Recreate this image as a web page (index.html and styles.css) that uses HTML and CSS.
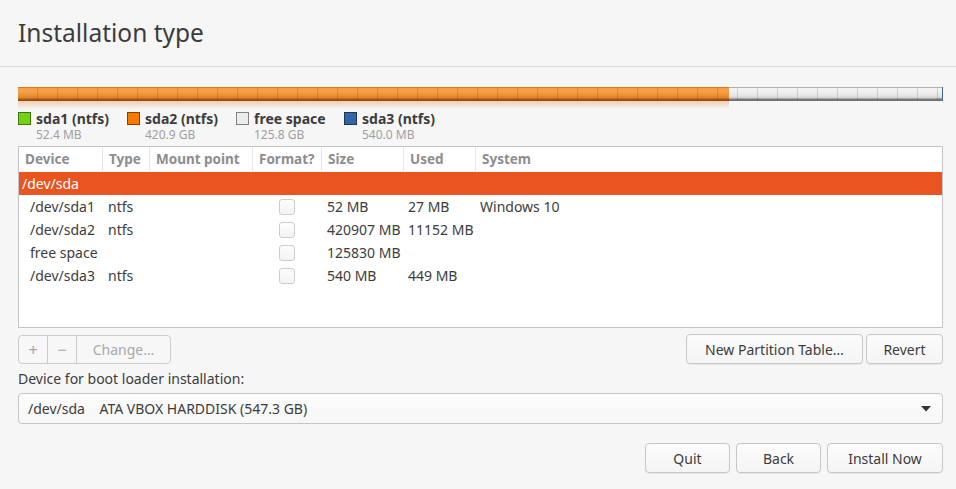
FILE: index.html
```html
<!DOCTYPE html>
<html>
<head>
<meta charset="utf-8">
<link rel="stylesheet" href="styles.css">
</head>
<body>
<div class="page">
  <header class="titlebar"><h1>Installation type</h1></header>
  <main class="content">
    <div class="diskbar">
      <div class="seg seg-sda2" style="width:711px"></div>
      <div class="seg seg-free" style="width:213px"></div>
      <div class="seg seg-sda3" style="width:1px"></div>
    </div>
    <div class="reflect">
      <div class="ref-orange" style="width:711px"></div>
    </div>
    <ul class="legend">
      <li class="leg leg1"><span class="sw sw-green"></span><div><b>sda1 (ntfs)</b><small>52.4 MB</small></div></li>
      <li class="leg leg2"><span class="sw sw-orange"></span><div><b>sda2 (ntfs)</b><small>420.9 GB</small></div></li>
      <li class="leg leg3"><span class="sw sw-free"></span><div><b>free space</b><small>125.8 GB</small></div></li>
      <li class="leg leg4"><span class="sw sw-blue"></span><div><b>sda3 (ntfs)</b><small>540.0 MB</small></div></li>
    </ul>
    <div class="table">
      <div class="row head">
        <div class="c c-dev">Device</div>
        <div class="c c-type">Type</div>
        <div class="c c-mnt">Mount point</div>
        <div class="c c-fmt">Format?</div>
        <div class="c c-size">Size</div>
        <div class="c c-used">Used</div>
        <div class="c c-sys">System</div>
      </div>
      <div class="row selected"><div class="c">/dev/sda</div></div>
      <div class="row part">
        <div class="c c-dev">/dev/sda1</div><div class="c c-type">ntfs</div><div class="c c-mnt"></div>
        <div class="c c-fmt"><span class="check"></span></div>
        <div class="c c-size">52 MB</div><div class="c c-used">27 MB</div><div class="c c-sys">Windows 10</div>
      </div>
      <div class="row part">
        <div class="c c-dev">/dev/sda2</div><div class="c c-type">ntfs</div><div class="c c-mnt"></div>
        <div class="c c-fmt"><span class="check"></span></div>
        <div class="c c-size">420907 MB</div><div class="c c-used">11152 MB</div><div class="c c-sys"></div>
      </div>
      <div class="row part">
        <div class="c c-dev">free space</div><div class="c c-type"></div><div class="c c-mnt"></div>
        <div class="c c-fmt"><span class="check"></span></div>
        <div class="c c-size">125830 MB</div><div class="c c-used"></div><div class="c c-sys"></div>
      </div>
      <div class="row part">
        <div class="c c-dev">/dev/sda3</div><div class="c c-type">ntfs</div><div class="c c-mnt"></div>
        <div class="c c-fmt"><span class="check"></span></div>
        <div class="c c-size">540 MB</div><div class="c c-used">449 MB</div><div class="c c-sys"></div>
      </div>
    </div>
    <div class="toolrow">
      <div class="tools">
        <button class="tbtn tb-plus">+</button>
        <button class="tbtn tb-minus">&minus;</button>
        <button class="tbtn tb-change">Change…</button>
      </div>
      <div class="rightbtns">
        <button class="btn btn-npt">New Partition Table…</button>
        <button class="btn btn-revert">Revert</button>
      </div>
    </div>
    <label class="bootlabel">Device for boot loader installation:</label>
    <div class="combo">
      <span class="combo-text">/dev/sda&nbsp;&nbsp;&nbsp;&nbsp;ATA VBOX HARDDISK (547.3 GB)</span>
      <svg class="combo-arrow" width="10" height="6" viewBox="0 0 10 6"><path d="M0 0 H10 L5 5.5 Z" fill="#333"/></svg>
    </div>
    <div class="footer">
      <button class="btn btn-quit">Quit</button>
      <button class="btn btn-back">Back</button>
      <button class="btn btn-install">Install Now</button>
    </div>
  </main>
</div>
</body>
</html>
```

FILE: styles.css
```css
* { box-sizing: border-box; }
html, body { margin: 0; padding: 0; }
body {
  background: #f6f6f6;
  font-family: "Noto Sans", "DejaVu Sans", sans-serif;
  font-size: 14px;
  color: #3c3c3c;
  width: 956px;
  height: 489px;
  overflow: hidden;
}
.titlebar {
  height: 67px;
  border-bottom: 1px solid #dcdcdc;
  padding: 17px 0 0 18px;
}
.titlebar h1 {
  margin: 0;
  font-weight: normal;
  font-size: 24.5px;
  color: #3c3c3c;
  letter-spacing: 0;
  line-height: 32px;
}
.content { padding: 0 13px 0 18px; }
.diskbar {
  margin-top: 20px;
  position: relative;
  display: flex;
  height: 14px;
  width: 925px;
}
.diskbar::after {
  content: "";
  position: absolute;
  inset: 1px 0 1px 0;
  background: repeating-linear-gradient(90deg, transparent 0 19px, rgba(0,0,0,0.13) 19px 20px);
  pointer-events: none;
}
.seg { height: 14px; }
.seg-sda2 {
  background: linear-gradient(#d8782a 0 1px, #f99b42 1px, #f7a24c 4px, #ef9338 8px, #e08028 11px, #a8591a 12px, #8a4a16 14px);
}
.seg-free {
  background: linear-gradient(#b0b0b0 0 1px, #f4f4f4 1px, #efefef 5px, #e4e4e4 9px, #cfcfcf 11px, #7f7f7f 12px, #6a6a6a 14px);
}
.seg-sda3 { background: #3b6aa0; }
.reflect { height: 8px; display: flex; }
.ref-orange {
  background: linear-gradient(rgba(230,130,40,0.35), rgba(230,130,40,0));
}
.legend {
  list-style: none;
  margin: 0;
  padding: 0;
  display: flex;
  height: 37px;
}
.leg { display: flex; align-items: flex-start; }
.leg1 { width: 109px; }
.leg2 { width: 109px; }
.leg3 { width: 108px; }
.sw {
  width: 13px; height: 13px;
  margin-top: 3px;
  margin-right: 5px;
  border: 1px solid rgba(0,0,0,0.45);
}
.sw-green { background: #73d216; }
.sw-orange { background: #f57900; }
.sw-free { background: #ececec; }
.sw-blue { background: #3465a4; }
.leg b { display: block; font-weight: bold; font-size: 14px; line-height: 19px; color: #3c3c3c; }
.leg small { display: block; font-size: 12px; line-height: 14px; color: #a0a0a0; }
.table {
  width: 925px;
  height: 182px;
  border: 1px solid #c4c4c4;
  background: #fff;
}
.row { display: flex; height: 23px; align-items: center; }
.head { height: 24px; }
.head .c {
  color: #8d8d8d;
  font-weight: bold;
  font-size: 13.5px;
  height: 24px;
  line-height: 24px;
  border-right: 1px solid #e6e6e6;
  padding-left: 6px;
}
.head .c-sys { border-right: none; }
.c-dev { width: 84px; }
.c-type { width: 47px; }
.c-mnt { width: 103px; }
.c-fmt { width: 69px; }
.c-size { width: 82px; }
.c-used { width: 72px; }
.c-sys { flex: 1; }
.selected { background: #e95420; color: #fff; margin-top: 1px; }
.selected .c { padding-left: 3px; }
.part .c { padding-left: 6px; white-space: nowrap; }
.part .c-dev { padding-left: 11px; width: 89px; }
.part .c-type { width: 42px; padding-left: 0; }
.part .c-fmt { padding-left: 26px; display: flex; align-items: center; }
.part .c-size { padding-left: 5px; }
.part .c-used { padding-left: 4px; }
.part .c-sys { padding-left: 4px; }
.check {
  width: 16px; height: 16px;
  border: 1px solid #cdcdcd;
  border-radius: 3px;
  background: linear-gradient(#fdfdfd, #f3f3f3);
}
.toolrow {
  display: flex;
  justify-content: space-between;
  margin-top: 6px;
  width: 925px;
}
.tools {
  display: flex;
  border: 1px solid #cbcbcb;
  border-radius: 4px;
  height: 29px;
  margin-top: 1px;
  background: #f7f7f7;
}
.tbtn {
  font-family: inherit;
  border: none;
  background: transparent;
  color: #a8a8a8;
  font-size: 14px;
  padding: 0;
  height: 27px;
}
.tb-plus { width: 29px; border-right: 1px solid #cbcbcb; font-size: 17px; }
.tb-minus { width: 29px; border-right: 1px solid #cbcbcb; font-size: 17px; }
.tb-change { width: 93px; }
.rightbtns { display: flex; gap: 3px; }
.btn {
  font-family: inherit;
  font-size: 14px;
  color: #3c3c3c;
  background: linear-gradient(#fbfbfb, #f5f5f5);
  border: 1px solid #c7c7c7;
  border-radius: 4px;
  height: 30px;
  padding: 0;
  box-shadow: 0 1px 0 rgba(0,0,0,0.05);
}
.btn-npt { width: 177px; }
.btn-revert { width: 77px; }
.bootlabel { display: block; margin-top: 5px; line-height: 20px; font-size: 14px; color: #3c3c3c; }
.combo {
  margin-top: 4px;
  width: 925px;
  height: 31px;
  border: 1px solid #c7c7c7;
  border-radius: 4px;
  background: linear-gradient(#fcfcfc, #f7f7f7);
  display: flex;
  align-items: center;
  justify-content: space-between;
  padding: 0 11px 0 9px;
}
.combo-text { font-size: 14px; }
.footer {
  display: flex;
  justify-content: flex-end;
  gap: 6px;
  margin-top: 19px;
  width: 925px;
}
.btn-quit { width: 85px; }
.btn-back { width: 85px; }
.btn-install { width: 116px; }
```
